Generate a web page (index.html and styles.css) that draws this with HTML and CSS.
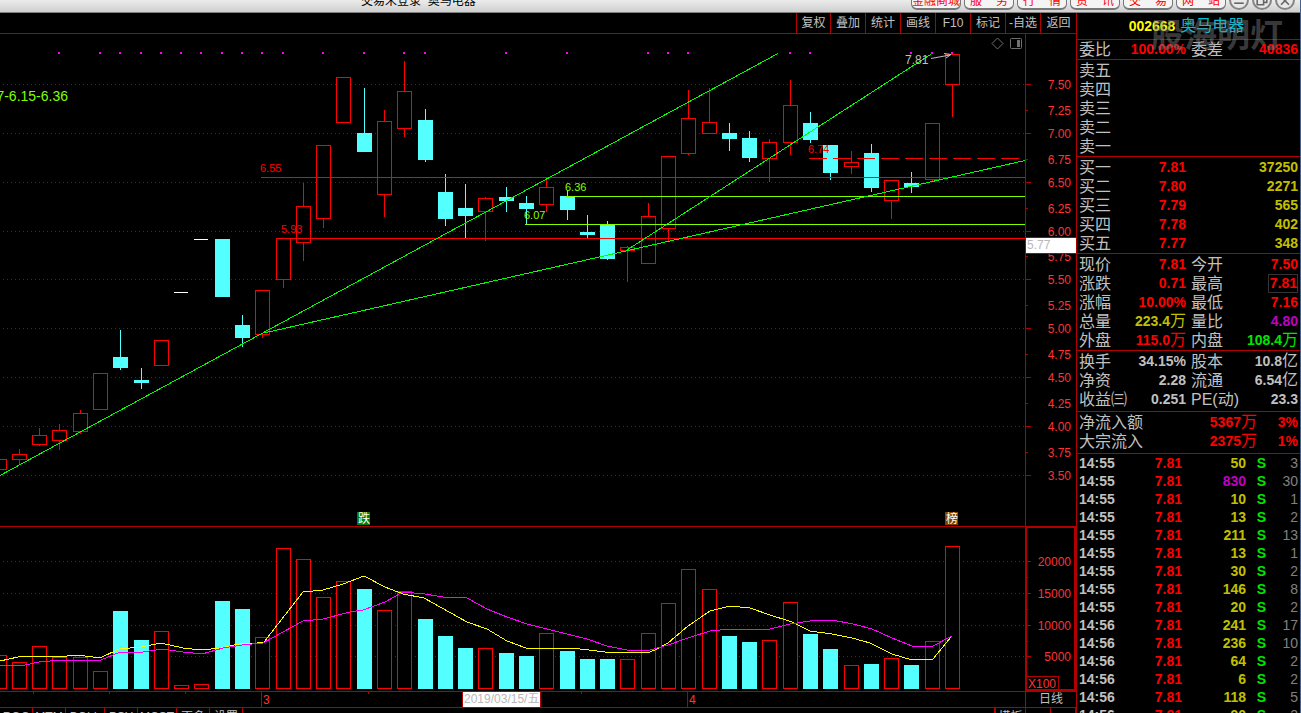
FILE: index.html
```html
<!DOCTYPE html>
<html lang="zh-CN">
<head>
<meta charset="utf-8">
<title>奥马电器 002668</title>
<link rel="stylesheet" href="styles.css">
</head>
<body>
<div class="app">
  <header class="titlebar">
    <span class="title">交易未登录&nbsp; 奥马电器</span>
    <nav class="links">
      <button class="pill"><span>金融商城</span></button>
      <button class="pill"><span>服</span><span>务</span></button>
      <button class="pill"><span>行</span><span>情</span></button>
      <button class="pill"><span>资</span><span>讯</span></button>
      <button class="pill"><span>交</span><span>易</span></button>
      <button class="pill"><span>网</span><span>站</span></button>
      <button class="round" aria-label="最小化"><svg viewBox="0 0 20 20"><path d="M4 14H16"/></svg></button>
      <button class="round" aria-label="还原"><svg viewBox="0 0 20 20"><path d="M4 9H12V16H4ZM8 9V5H16V13H12"/></svg></button>
      <button class="round" aria-label="关闭"><svg viewBox="0 0 20 20"><path d="M5 6L15 16M15 6L5 16"/></svg></button>
    </nav>
  </header>
  <div class="body">
    <main class="main">
      <nav class="toolbar">
        <button>复权</button><button>叠加</button><button>统计</button><button>画线</button><button>F10</button><button>标记</button><button>-自选</button><button>返回</button>
      </nav>
      <svg class="chart" viewBox="0 34 1076 657" role="img" aria-label="日K线">
        <g id="grid"></g>
        <g id="candles"></g>
        <g id="volumes"></g>
        <g class="level red">
          <path d="M261 177.5H1025M276 238.5H1025"/>
          <path d="M809 158.5H1020" stroke-dasharray="18 6"/>
        </g>
        <path class="level lime" d="M566 196.5H1025M525 224.5H1025"/>
        <path class="level trend" d="M0 475.5L778 53.5M264 333L1025 160.5M627 250L932 53.5"/>
        <polyline class="level ma5" points="0,661 18,657 33,656 67,656 80,655 85,656 100,658 119,649 141,647 161,643 183,648 201,650 221,648 243,643 257,643 264,642 303,592 323,590 343,584 364,576 385,587 403,594 424,598 467,622 487,629 507,641 526,648 572,648 605,652 650,652 657,649 668,643 688,626 710,611 730,606 750,608 770,615 792,622 810,631 832,634 852,638 870,643 892,654 912,660 933,659 951,637"/>
        <polyline class="level ma10" points="0,666 25,665 39,662 50,661 72,660 101,660 120,652 143,652 162,649 183,652 202,654 223,648 242,645 263,643 283,632 303,621 323,619 350,612 363,610 385,602 403,592 425,594 443,597 467,598 487,609 507,617 527,624 563,633 587,639 607,646 627,650 650,650 668,645 688,638 710,631 730,629 750,630 770,629 790,624 810,621 832,620 853,624 872,629 892,638 912,646 933,646 952,636"/>
        <g id="dots"></g>
        <g class="frame">
          <path d="M1025.5 34V527M0 526.5H1076"/>
          <path class="thick" d="M1026 527H1075V690H1026Z"/>
          <path d="M1026 676.5H1058.5V690"/>
        </g>
        <g id="axis" class="axis"></g>
        <text class="axis-text" x="1028" y="688">X100</text>
        <rect class="white" x="1026" y="238" width="50" height="15"/>
        <path class="frameline" d="M1026 237.5H1076M1026 253.5H1076"/>
        <text class="cursor-text" x="1027" y="249">5.77</text>
        <text class="note lime-text" x="68" y="101" text-anchor="end">7-6.15-6.36</text>
        <g class="tag-text">
          <text class="red-text" x="260" y="172">6.55</text>
          <text class="red-text" x="281" y="233">5.93</text>
          <text class="red-text" x="808" y="153">6.74</text>
          <text class="lime-text" x="565" y="191">6.36</text>
          <text class="lime-text" x="524" y="219">6.07</text>
        </g>
        <text class="peak" x="905" y="64">7.81</text>
        <path class="arrow" d="M931 58.5L950 55M944 53.5L951 54.5L946 58"/>
        <path class="icon" d="M997.5 38L1003 43.5L997.5 49L992 43.5Z"/>
        <rect class="icon" x="1010.5" y="38.5" width="11" height="10" rx="1"/>
        <rect class="icon-fill" x="1017" y="40" width="3" height="7"/>
        <rect class="fall" x="357" y="512" width="13" height="13"/>
        <rect class="rank" x="945" y="512" width="13" height="13"/>
        <text class="badge" x="358" y="523">跌</text>
        <text class="badge" x="946" y="523">榜</text>
      </svg>
      <div class="dates">
        <svg class="date-axis" viewBox="0 0 1025 17">
          <path class="frameline" d="M33.5 1V3M109.5 1V3M185.5 1V3M368.5 1V3M581.5 1V3M261.5 1V17M687.5 1V17"/>
          <text class="axis-text" x="263" y="13">3</text>
          <text class="axis-text" x="689" y="13">4</text>
          <rect class="date-box" x="462.5" y="0.5" width="78" height="16"/>
          <text class="cursor-text" x="464" y="12">2019/03/15/五</text>
        </svg>
        <button class="period">日线</button>
      </div>
      <nav class="tabs">
        <button>ROC</button><button>MTM</button><button class="wide">BOLL</button><button>PSY</button><button class="wide">MCST</button><button>更多</button><button>设置</button>
        <span class="spacer"></span>
        <button class="template">模板</button><button class="small">+</button><button class="small">-</button>
      </nav>
    </main>
    <aside class="side">
      <h1 class="stock"><b>002668</b><span>奥马电器</span></h1>
      <div class="watermark">股海明灯</div>
      <section class="ratio">
        <div class="row"><p><span>委比</span><b class="r">100.00%</b></p><p><span>委差</span><b class="r">40836</b></p></div>
      </section>
      <section>
        <div class="row"><p>卖五</p></div>
        <div class="row"><p>卖四</p></div>
        <div class="row"><p>卖三</p></div>
        <div class="row"><p>卖二</p></div>
        <div class="row"><p>卖一</p></div>
      </section>
      <section>
        <div class="row"><p><span>买一</span><b class="r">7.81</b></p><p class="end"><b class="y">37250</b></p></div>
        <div class="row"><p><span>买二</span><b class="r">7.80</b></p><p class="end"><b class="y">2271</b></p></div>
        <div class="row"><p><span>买三</span><b class="r">7.79</b></p><p class="end"><b class="y">565</b></p></div>
        <div class="row"><p><span>买四</span><b class="r">7.78</b></p><p class="end"><b class="y">402</b></p></div>
        <div class="row"><p><span>买五</span><b class="r">7.77</b></p><p class="end"><b class="y">348</b></p></div>
      </section>
      <section>
        <div class="row"><p><span>现价</span><b class="r">7.81</b></p><p><span>今开</span><b class="r">7.50</b></p></div>
        <div class="row"><p><span>涨跌</span><b class="r">0.71</b></p><p><span>最高</span><b class="r boxed">7.81</b></p></div>
        <div class="row"><p><span>涨幅</span><b class="r">10.00%</b></p><p><span>最低</span><b class="r">7.16</b></p></div>
        <div class="row"><p><span>总量</span><b class="y">223.4<i>万</i></b></p><p><span>量比</span><b class="m">4.80</b></p></div>
        <div class="row"><p><span>外盘</span><b class="r">115.0<i>万</i></b></p><p><span>内盘</span><b class="g">108.4<i>万</i></b></p></div>
      </section>
      <section class="loose">
        <div class="row"><p><span>换手</span><b>34.15%</b></p><p><span>股本</span><b>10.8<i>亿</i></b></p></div>
        <div class="row"><p><span>净资</span><b>2.28</b></p><p><span>流通</span><b>6.54<i>亿</i></b></p></div>
        <div class="row"><p><span>收益㈢</span><b>0.251</b></p><p><span>PE(动)</span><b>23.3</b></p></div>
      </section>
      <section class="loose">
        <div class="row flow"><span>净流入额</span><b class="r">5367<i>万</i></b><b class="r pct">3%</b></div>
        <div class="row flow"><span>大宗流入</span><b class="r">2375<i>万</i></b><b class="r pct">1%</b></div>
      </section>
      <table class="ticks">
        <colgroup><col class="c1"><col class="c2"><col class="c3"><col class="c4"><col class="c5"></colgroup>
        <tbody>
        <tr><td>14:55</td><td>7.81</td><td>50</td><td>S</td><td>3</td></tr>
        <tr><td>14:55</td><td>7.81</td><td class="m">830</td><td>S</td><td>30</td></tr>
        <tr><td>14:55</td><td>7.81</td><td>10</td><td>S</td><td>1</td></tr>
        <tr><td>14:55</td><td>7.81</td><td>13</td><td>S</td><td>2</td></tr>
        <tr><td>14:55</td><td>7.81</td><td>211</td><td>S</td><td>13</td></tr>
        <tr><td>14:55</td><td>7.81</td><td>13</td><td>S</td><td>1</td></tr>
        <tr><td>14:55</td><td>7.81</td><td>30</td><td>S</td><td>2</td></tr>
        <tr><td>14:55</td><td>7.81</td><td>146</td><td>S</td><td>8</td></tr>
        <tr><td>14:55</td><td>7.81</td><td>20</td><td>S</td><td>2</td></tr>
        <tr><td>14:56</td><td>7.81</td><td>241</td><td>S</td><td>17</td></tr>
        <tr><td>14:56</td><td>7.81</td><td>236</td><td>S</td><td>10</td></tr>
        <tr><td>14:56</td><td>7.81</td><td>64</td><td>S</td><td>2</td></tr>
        <tr><td>14:56</td><td>7.81</td><td>6</td><td>S</td><td>2</td></tr>
        <tr><td>14:56</td><td>7.81</td><td>118</td><td>S</td><td>5</td></tr>
        <tr><td>14:56</td><td>7.81</td><td>90</td><td>S</td><td>2</td></tr>
        </tbody>
      </table>
    </aside>
  </div>
</div>
<script src="chart.js"></script>
</body>
</html>
```
FILE: styles.css
```css
* { box-sizing: border-box; }
body {
  margin: 0;
  background: #000;
  color: #c0c0c0;
  font-family: "Liberation Sans", "Noto Sans CJK SC", sans-serif;
  font-size: 12px;
}
button {
  margin: 0;
  padding: 0;
  border: 0;
  background: none;
  color: inherit;
  font: inherit;
  white-space: nowrap;
}
p, h1 { margin: 0; font-size: inherit; font-weight: normal; }
i { font-style: normal; font-weight: normal; font-size: 16px; line-height: 0; }
.app {
  height: 100vh;
  overflow: hidden;
  display: flex;
  flex-direction: column;
  border-right: 1px solid #46648c;
}

/* Title bar */
.titlebar {
  display: flex;
  align-items: flex-end;
  flex: none;
  height: 13px;
  overflow: hidden;
  background: linear-gradient(#ececec, #cfcfcf);
  border-bottom: 1px solid #808080;
  color: #000;
}
.title { flex: 1; padding-left: 361px; line-height: 18px; padding-bottom: 2px; }
.links { display: flex; align-items: flex-end; gap: 3px; padding-right: 5px; }
.pill {
  display: flex;
  justify-content: space-between;
  align-items: flex-end;
  width: 50px;
  height: 20px;
  margin-bottom: 2px;
  padding: 0 5px;
  border: 1px solid #777;
  border-bottom-width: 2px;
  border-radius: 6px;
  background: #f4f4f4;
  color: #f00;
  line-height: 14px;
}
.pill:first-child { padding: 0; justify-content: center; }
.round {
  width: 20px;
  height: 20px;
  margin-bottom: 2px;
  border: 2px solid #858585;
  border-radius: 50%;
  background: #e8e8e8;
}
.round svg { display: block; width: 16px; height: 16px; fill: none; stroke: #666; stroke-width: 2; }

.body { display: flex; flex: 1; min-height: 0; }
.main { flex: 1; min-width: 0; }

/* Toolbar */
.toolbar {
  display: flex;
  justify-content: flex-end;
  height: 21px;
  border-bottom: 1px solid #b00000;
}
.toolbar button { width: 35px; border-left: 1px solid #b00000; line-height: 20px; }
.toolbar button:last-child { width: 36px; }
.toolbar button:first-child { width: 34px; }

/* Chart */
.chart { display: block; width: 100%; height: auto; }
.chart text, .date-axis text { font-size: 12px; }
.level { fill: none; stroke-width: 1; shape-rendering: crispEdges; }
.red, .up { stroke: #f00; }
.lime { stroke: #80ff00; }
.trend { stroke: #0f0; }
.ma5 { stroke: #ff0; }
.ma10 { stroke: #f0f; }
.up { fill: #000; shape-rendering: crispEdges; }
.down { fill: #54ffff; stroke: none; shape-rendering: crispEdges; }
.flat { fill: #fff; }
.dot { fill: #f0f; }
.gridline { stroke: #a00000; stroke-dasharray: 1 3; shape-rendering: crispEdges; }
.frame path, .frameline, .axis path { fill: none; stroke: #b00000; shape-rendering: crispEdges; }
.frame .thick { stroke-width: 2; }
.axis text, .axis-text { fill: #ff3232; }
.axis text { text-anchor: end; }
.white { fill: #fff; }
.cursor-text { fill: #b8b8b8; }
.chart .note { font-size: 14px; }
.chart .tag-text text { font-size: 11px; }
.red-text { fill: #f00; }
.lime-text { fill: #80ff00; }
.peak { fill: #c0c0c0; }
.arrow { fill: none; stroke: #c0c0c0; }
.icon { fill: none; stroke: #707070; }
.icon-fill { fill: #707070; }
.fall { fill: #008000; }
.rank { fill: #804000; }
.badge { fill: #fff; }

/* Date strip and indicator tabs */
.dates {
  display: grid;
  grid-template-columns: 1025fr 51fr;
  border-top: 1px solid #b00000;
  border-bottom: 1px solid #b00000;
  height: 17px;
}
.date-axis { display: block; width: 100%; margin-top: -1px; }
.date-box { fill: #fff; stroke: #b00000; }
.period { border-left: 1px solid #b00000; line-height: 15px; }
.tabs { display: flex; height: 20px; align-items: flex-start; }
.tabs button { width: 33px; height: 20px; border-right: 1px solid #b00000; line-height: 14px; padding-bottom: 2px; }
.tabs .wide { width: 39px; }
.tabs .template { width: 32px; border-left: 2px solid #b00000; }
.tabs .small { width: 25px; }
.spacer { flex: 1; }

/* Quote panel */
.side {
  position: relative;
  width: 224px;
  flex: none;
  border-left: 1px solid #b00000;
  font-size: 16px;
  overflow: hidden;
}
.stock {
  display: flex;
  justify-content: center;
  align-items: center;
  gap: 5px;
  height: 27px;
  padding-right: 4px;
  border-bottom: 1px solid #b00000;
  line-height: 26px;
}
.stock b { color: #ff0; }
.stock span { color: #00c0d8; }
.watermark {
  position: absolute;
  top: 0;
  left: 74px;
  color: rgba(130, 130, 130, 0.45);
  font-size: 33px;
  font-weight: bold;
  line-height: 46px;
  white-space: nowrap;
}
.side b { font-size: 14px; white-space: nowrap; }
.side section { padding: 1px 2px 0; border-bottom: 1px solid #b00000; }
.side .ratio { padding-top: 0; }
.side .loose { padding-bottom: 2px; }
.row { display: grid; grid-template-columns: 1fr 1fr; gap: 5px; height: 19px; line-height: 19px; }
.row p { display: flex; justify-content: space-between; white-space: nowrap; }
.row .end { justify-content: flex-end; }
.row.flow { grid-template-columns: 1fr auto 36px; }
.pct { text-align: right; }
.r { color: #f00; }
.y { color: #c0c000; }
.m { color: #c000c0; }
.g { color: #00e600; }
.boxed { border: 1px solid #333; line-height: 17px; padding-left: 1px; height: 19px; }
.ticks { width: 100%; border-collapse: collapse; table-layout: fixed; font-size: 14px; font-weight: bold; }
.ticks td { height: 18px; padding: 0; line-height: 18px; text-align: right; }
.ticks td:nth-child(1) { padding-left: 2px; text-align: left; }
.ticks td:nth-child(2) { color: #f00; }
.ticks td:nth-child(3) { color: #c0c000; }
.ticks td.m { color: #c000c0; }
.ticks td:nth-child(4) { color: #00e600; }
.ticks td:nth-child(5) { padding-right: 2px; color: #808080; font-weight: normal; }
.c1 { width: 50px; }
.c2 { width: 55px; }
.c3 { width: 64px; }
.c4 { width: 20px; }
```
FILE: chart.js
```js
// Each candle: left, body top, body bottom, high, low, volume top, kind (u = up, d = down, f = flat)
const candles = [
  [-8,459,470,459,470,655,'u'],[12,454,460,449,464,662,'u'],[32,435,445,428,446,646,'u'],
  [52,430,441,424,450,657,'u'],[73,413,432,410,434,657,'u'],[93,373,410,373,410,671,'u'],
  [113,357,368,330,370,611,'d'],[134,380,383,368,389,640,'d'],[154,340,366,340,366,631,'u'],
  [174,292,293,292,293,685,'f'],[194,239,240,239,240,684,'f'],[215,239,297,239,297,601,'d'],
  [235,325,338,315,347,609,'d'],[255,290,335,290,338,637,'u'],[276,238,280,238,288,548,'u'],
  [296,206,243,183,261,559,'u'],[316,145,219,145,228,597,'u'],[336,77,123,77,123,581,'u'],
  [357,133,152,88,152,589,'d'],[377,121,195,110,217,610,'u'],[397,91,129,61,137,591,'u'],
  [418,120,160,109,162,619,'d'],[438,192,219,174,226,636,'d'],[458,208,216,184,238,648,'d'],
  [478,198,212,197,241,648,'u'],[499,197,201,187,212,653,'d'],[519,203,209,196,224,656,'d'],
  [539,187,205,178,212,633,'u'],[560,196,210,190,220,651,'d'],[580,232,235,215,238,659,'d'],
  [600,224,259,221,260,659,'d'],[620,247,251,246,282,659,'u'],[641,216,264,203,264,633,'u'],
  [661,156,229,156,241,603,'u'],[681,118,154,90,155,569,'u'],[702,122,134,88,134,589,'u'],
  [722,133,139,123,151,636,'d'],[742,138,158,131,162,642,'d'],[762,142,159,139,182,640,'u'],
  [783,105,143,80,155,602,'u'],[803,123,140,112,143,634,'d'],[823,145,173,145,180,649,'d'],
  [844,162,167,151,174,665,'u'],[864,153,188,144,192,664,'d'],[884,180,201,180,219,658,'u'],
  [904,183,187,172,193,665,'d'],[925,123,180,123,182,641,'u'],[945,54,85,54,117,546,'u']
];
const volumeBase = 689;
const fill = (id, html) => { document.getElementById(id).innerHTML = html; };

const bar = (x, top, bottom, kind) => kind === 'd'
  ? `<rect class="down" x="${x}" y="${top}" width="15" height="${bottom - top}"/>`
  : `<rect class="up" x="${x + 0.5}" y="${top + 0.5}" width="14" height="${bottom - top - 1}"/>`;

fill('candles', candles.map(([x, top, bottom, high, low, , kind]) => {
  if (kind === 'f') return `<rect class="flat" x="${x}" y="${top}" width="14" height="1"/>`;
  const wick = kind === 'd'
    ? `<rect class="down" x="${x + 7}" y="${high}" width="1" height="${low - high}"/>`
    : `<path class="up" d="M${x + 7.5} ${high}V${top}M${x + 7.5} ${bottom}V${low}"/>`;
  return wick + bar(x, top, bottom, kind);
}).join(''));
fill('volumes', candles.map(c => bar(c[0], c[5], volumeBase, c[6])).join(''));

const priceRows = [84, 133, 182, 231, 279, 328, 377, 426, 475];
const volumeRows = [561, 593, 625, 656];
fill('grid', [...priceRows, ...volumeRows]
  .map(y => `<path class="gridline" d="M3 ${y + 0.5}H1025"/>`).join(''));

let axis = '';
for (let i = 0; i < 17; i++) {
  const y = i % 2 ? Math.round((priceRows[(i - 1) / 2] + priceRows[(i + 1) / 2]) / 2) + 1 : priceRows[i / 2];
  axis += `<path d="M1026 ${y + 0.5}h${i % 2 ? 2 : 5}"/>`;
  axis += `<text x="1071" y="${y + 5}">${(7.5 - i * 0.25).toFixed(2)}</text>`;
}
volumeRows.forEach((y, i) => {
  axis += `<path d="M1026 ${y + 0.5}h5"/><text x="1071" y="${y + 5}">${20000 - i * 5000}</text>`;
  if (i < 3) axis += `<path d="M1026 ${y + 16.5}h2"/>`;
});
fill('axis', axis);

fill('dots', [58, 99, 119, 140, 160, 180, 200, 221, 241, 261, 282, 322, 363, 403, 424, 505, 566,
  647, 667, 687, 789, 809, 910, 931, 951]
  .map(x => `<rect class="dot" x="${x}" y="52" width="2" height="2"/>`).join(''));
```
